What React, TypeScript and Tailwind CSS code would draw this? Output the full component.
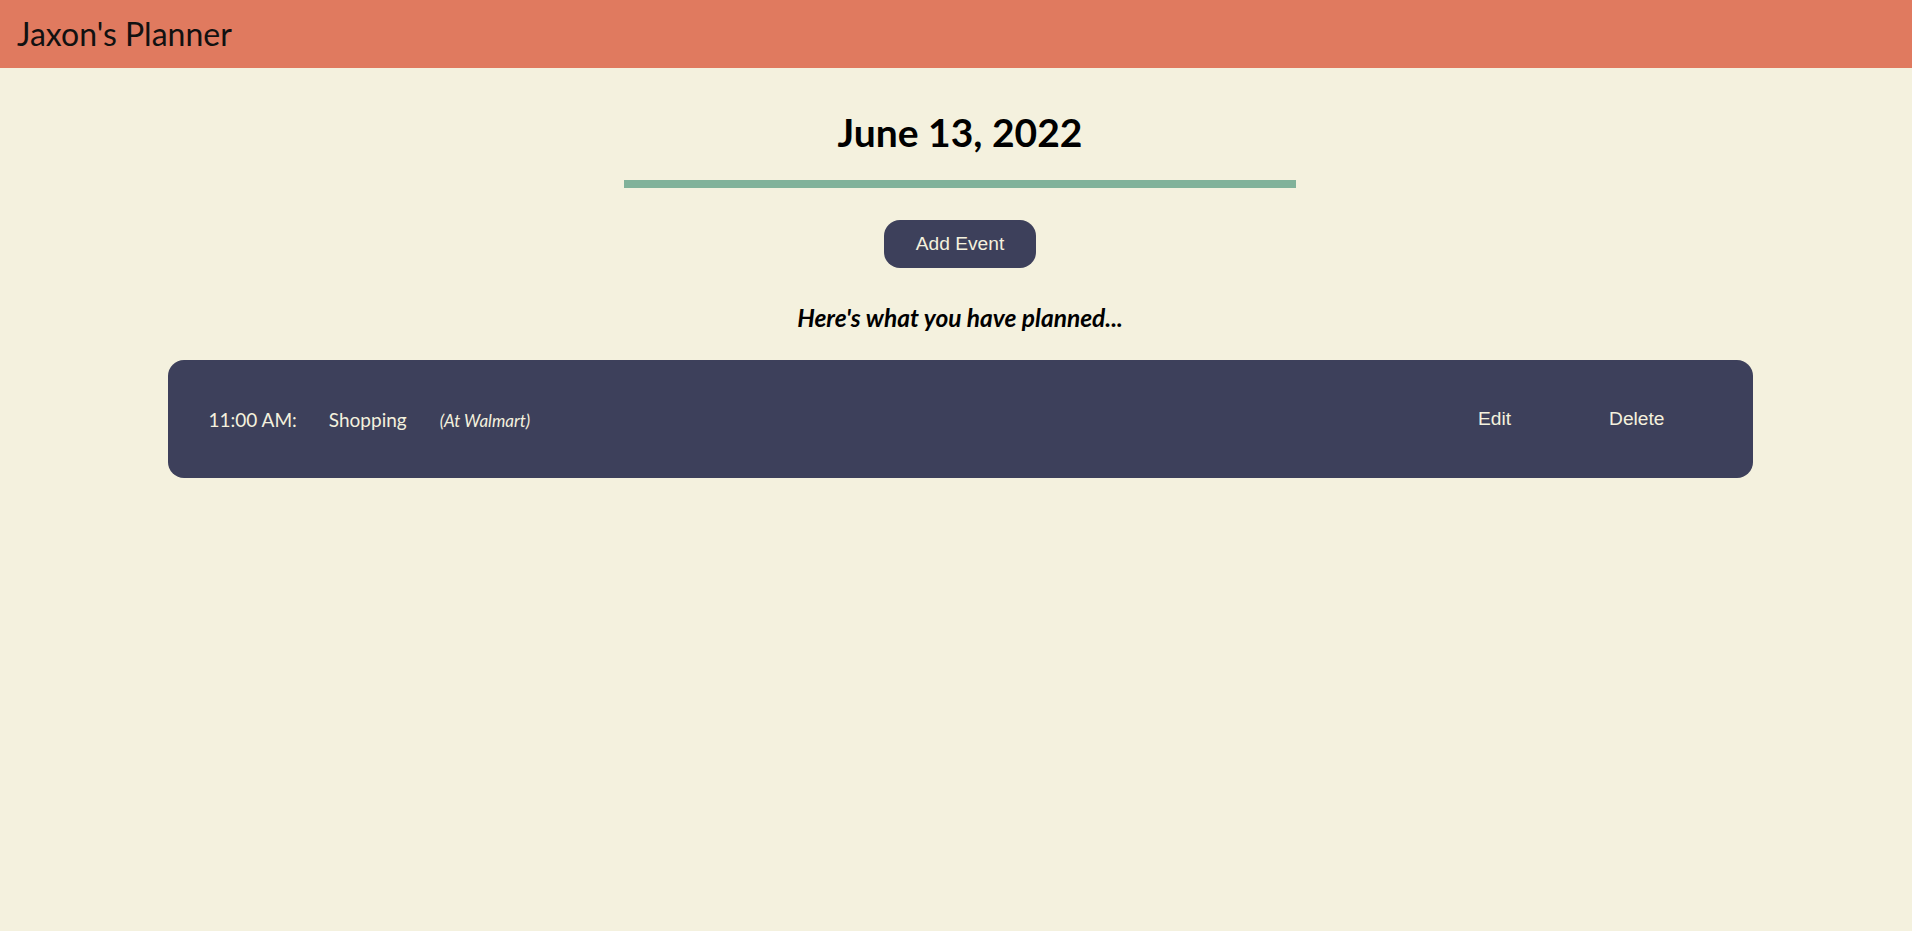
import React from "react";

export default function App() {
  return (
    <div className="min-h-[931px] w-full bg-[#F4F1DE]" style={{ fontFamily: "Lato, 'Noto Sans', sans-serif" }}>
      <header className="h-[68px] bg-[#E07A5F] flex items-center px-[17px]">
        <h1 className="text-[32px] leading-none text-[#111] font-normal" style={{ fontFamily: "Lato, sans-serif" }}>
          Jaxon's Planner
        </h1>
      </header>
      <main className="flex flex-col items-center pl-2">
        <h2 className="mt-[40px] text-[39px] leading-[48px] font-bold text-black">June 13, 2022</h2>
        <div className="mt-[24px] h-[8px] w-[672px] bg-[#81B29A]" />
        <button
          className="mt-[32px] h-[48px] w-[152px] rounded-[16px] bg-[#3D405B] text-[#F4F1DE] text-[19.2px]"
          style={{ fontFamily: "'Liberation Sans', Arial, sans-serif" }}
        >
          Add Event
        </button>
        <h3 className="mt-[35px] text-[24.5px] leading-[29px] font-bold italic text-black">
          Here's what you have planned...
        </h3>
        <div className="mt-[28px] h-[118px] w-[1585px] rounded-[16px] bg-[#3D405B] flex items-center pl-[41px] pr-[41px] text-[#F4F1DE]">
          <div className="flex items-center pt-[3px]">
            <span className="text-[19px]">11:00 AM:</span>
            <span className="ml-[32px] text-[19px]">Shopping</span>
            <span className="ml-[33px] text-[17px] italic">(At Walmart)</span>
          </div>
          <div className="ml-auto flex" style={{ fontFamily: "'Liberation Sans', Arial, sans-serif" }}>
            <button className="pl-[47px] pr-[51px] text-[19.2px]">Edit</button>
            <button className="px-[47px] text-[19.2px]">Delete</button>
          </div>
        </div>
      </main>
    </div>
  );
}
